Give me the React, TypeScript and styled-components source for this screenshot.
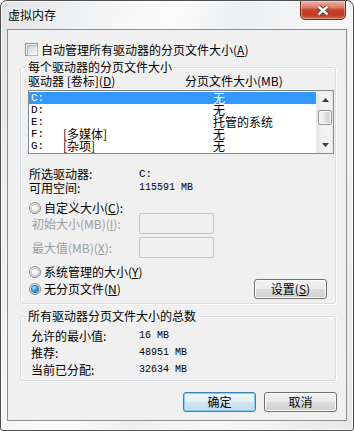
import React from "react";
import styled, { createGlobalStyle } from "styled-components";

const Global = createGlobalStyle`
  html, body { margin: 0; padding: 0; background: #ffffff; }
  body { font-family: "Noto Sans CJK SC", "Noto Sans", sans-serif; font-size: 12px; color: #000; }
  * { box-sizing: border-box; }
`;

const Win = styled.div`
  width: 354px;
  height: 431px;
  border: 1px solid #4e4e4e;
  border-radius: 7px 7px 3px 3px;
  background: linear-gradient(105deg, #e2e5e8 0%, #f3f4f5 22%, #fcfcfc 38%, #eceef0 52%, #f8f8f8 70%, #e6e8ea 100%);
  box-shadow: inset 0 0 0 1px rgba(255, 255, 255, 0.75);
  display: flex;
  flex-direction: column;
  overflow: hidden;
`;

const TitleBar = styled.div`
  height: 28px;
  display: flex;
  justify-content: space-between;
  align-items: flex-start;
  padding: 0 7px;
`;

const Title = styled.div`
  margin-top: 8px;
  font-size: 12px;
  line-height: 12px;
  text-shadow: 0 0 5px #fff, 0 0 3px #fff;
`;

const CloseBtn = styled.div`
  width: 46px;
  height: 20px;
  margin-top: -1px;
  border: 1px solid #6e2a1f;
  border-radius: 0 0 5px 5px;
  background: linear-gradient(#eab0a2 0%, #de7d69 35%, #c8432b 50%, #c23a22 75%, #d8664b 100%);
  box-shadow: inset 0 0 0 1px rgba(255, 255, 255, 0.35);
  display: flex;
  align-items: center;
  justify-content: center;
`;

const Client = styled.div`
  margin: 0 6px;
  height: 392px;
  border: 1px solid #8f8f8f;
  background: #f0f0f0;
  display: flex;
  flex-direction: column;
`;

const CheckRow = styled.div`
  margin: 13px 0 0 17px;
  height: 13px;
  display: flex;
  align-items: center;
  gap: 3px;
  line-height: 13px;
`;

const CheckBox = styled.span`
  width: 13px;
  height: 13px;
  border: 1px solid #8e8f8f;
  background: #f5f5f5;
  padding: 1px;
  display: block;
  &::after {
    content: "";
    display: block;
    width: 9px;
    height: 9px;
    border: 1px solid #b3b6ba;
    background: linear-gradient(135deg, #cdcfd2 0%, #e6e7e8 50%, #f8f8f8 100%);
  }
`;

const Group = styled.fieldset<{ $mt: number; $pl: number }>`
  margin: ${(p) => p.$mt}px 10px 0 12px;
  padding: 0 1px ${(p) => (p.$pl === 7 ? 4 : 5)}px ${(p) => p.$pl}px;
  border: 1px solid #d5dfe5;
  border-radius: 3px;
  box-shadow: inset 1px 1px 0 #ffffff, 1px 1px 0 #ffffff;
  min-width: 0;
`;

const Legend = styled.legend<{ $ml: number }>`
  padding: 0 2px;
  margin-left: ${(p) => p.$ml}px;
  font-size: 12px;
  line-height: 12px;
  height: 12px;
`;

const HeaderRow = styled.div`
  margin-top: 2px;
  height: 12px;
  line-height: 12px;
  display: grid;
  grid-template-columns: 157px 1fr;
`;

const ListBox = styled.div`
  margin-top: 3px;
  height: 64px;
  border: 1px solid #828790;
  background: #ffffff;
  display: flex;
`;

const Rows = styled.div`
  flex: 1;
  padding-top: 1px;
`;

const Row = styled.div<{ $sel?: boolean }>`
  height: 12px;
  line-height: 12px;
  padding-left: 2px;
  display: grid;
  grid-template-columns: 32px 150px 1fr;
  background: ${(p) => (p.$sel ? "#3399ff" : "transparent")};
  color: ${(p) => (p.$sel ? "#ffffff" : "#000000")};
  white-space: nowrap;
`;

const Mono = styled.span<{ $size?: number }>`
  font-family: "Liberation Mono", "DejaVu Sans Mono", monospace;
  font-size: ${(p) => p.$size ?? 10}px;
`;

const ScrollBar = styled.div`
  width: 17px;
  display: flex;
  flex-direction: column;
  background: linear-gradient(90deg, #e4e4e4 0%, #f1f1f1 25%, #f3f3f3 75%, #e9e9e9 100%);
  border-left: 1px solid #ececec;
`;

const ArrowBtn = styled.div`
  height: 17px;
  display: flex;
  align-items: center;
  justify-content: center;
`;

const Track = styled.div`
  flex: 1;
  padding: 2px 1px 0 1px;
`;

const Thumb = styled.div`
  height: 15px;
  border: 1px solid #959595;
  border-radius: 2px;
  background: linear-gradient(90deg, #f4f4f4 0%, #eaeaea 45%, #dcdcdc 55%, #d2d2d2 100%);
  box-shadow: inset 0 0 0 1px #fbfbfb;
`;

const InfoRow = styled.div<{ $mt: number; $col: number; $pl: number }>`
  margin-top: ${(p) => p.$mt}px;
  padding-left: ${(p) => p.$pl}px;
  height: 12px;
  line-height: 12px;
  display: grid;
  grid-template-columns: ${(p) => p.$col}px 1fr;
  align-items: center;
`;

const RadioRow = styled.div<{ $mt: number; $h: number }>`
  margin-top: ${(p) => p.$mt}px;
  height: ${(p) => p.$h}px;
  padding-left: 1px;
  display: flex;
  align-items: center;
  gap: 3px;
  line-height: 12px;
`;

const Radio = styled.span<{ $checked?: boolean }>`
  width: 12px;
  height: 12px;
  border-radius: 50%;
  border: 1px solid #8a8c8e;
  background: radial-gradient(circle at 35% 30%, #ffffff 0%, #e6e6e6 55%, #cfd0d1 100%);
  display: flex;
  align-items: center;
  justify-content: center;
  flex-shrink: 0;
  &::after {
    content: "";
    width: 6px;
    height: 6px;
    border-radius: 50%;
    background: ${(p) =>
      p.$checked
        ? "radial-gradient(circle at 35% 30%, #bdf0ff 0%, #3a9be0 45%, #0d5aa6 100%)"
        : "radial-gradient(circle at 35% 30%, #ffffff 0%, #e9e9e9 100%)"};
    box-shadow: ${(p) => (p.$checked ? "0 0 0 1px #2f6fa8" : "0 0 0 1px #c9cacb")};
  }
`;

const InputRow = styled.div<{ $mt: number }>`
  margin-top: ${(p) => p.$mt}px;
  height: 21px;
  display: grid;
  grid-template-columns: 111px 75px;
  align-items: center;
`;

const DimLabel = styled.span`
  padding-left: 4px;
  color: #9d9d9d;
  line-height: 12px;
  white-space: nowrap;
`;

const TextBox = styled.div`
  height: 21px;
  border: 1px solid #c3c5c7;
  border-radius: 2px;
  background: #f0f0f0;
`;

const BottomRow = styled.div`
  margin-top: 1px;
  height: 20px;
  padding-left: 1px;
  display: flex;
  align-items: center;
  gap: 3px;
  line-height: 12px;
`;

const Button = styled.div<{ $primary?: boolean }>`
  width: 73px;
  height: 20px;
  border-radius: 3px;
  border: 1px solid ${(p) => (p.$primary ? "#3c7fb1" : "#707070")};
  background: ${(p) =>
    p.$primary
      ? "linear-gradient(#f0f7fb 0%, #e4f0f7 50%, #d2e4ef 50%, #c7dcea 100%)"
      : "linear-gradient(#f2f2f2 0%, #ebebeb 50%, #dddddd 50%, #cfcfcf 100%)"};
  box-shadow: ${(p) => (p.$primary ? "inset 0 0 0 1px #7fd0f7" : "inset 0 0 0 1px #fcfcfc")};
  display: flex;
  align-items: center;
  justify-content: center;
  line-height: 12px;
  white-space: nowrap;
`;

const SetButton = styled(Button)`
  margin-left: auto;
  margin-right: 7px;
`;

const ButtonBar = styled.div`
  margin-top: 11px;
  margin-right: 9px;
  display: flex;
  justify-content: flex-end;
  gap: 8px;
`;

const Key = styled.span`
  text-decoration: underline;
  text-underline-offset: 1px;
`;

const Mn = ({ k }: { k: string }) => (
  <span>
    (<Key>{k}</Key>)
  </span>
);

const UpArrow = () => (
  <svg width="7" height="4" viewBox="0 0 7 4">
    <path d="M3.5 0 L7 4 L0 4 Z" fill="#3d3d3d" />
  </svg>
);

const DownArrow = () => (
  <svg width="7" height="4" viewBox="0 0 7 4">
    <path d="M0 0 L7 0 L3.5 4 Z" fill="#3d3d3d" />
  </svg>
);

const CloseGlyph = () => (
  <svg width="14" height="11" viewBox="0 0 14 11">
    <path d="M2.5 1.5 L11.5 9.5 M11.5 1.5 L2.5 9.5" stroke="#4b3430" strokeWidth="4.2" />
    <path d="M2.5 1.5 L11.5 9.5 M11.5 1.5 L2.5 9.5" stroke="#ffffff" strokeWidth="2.4" />
  </svg>
);

const drives = [
  { d: "C:", label: "", size: "无", sel: true },
  { d: "D:", label: "", size: "无" },
  { d: "E:", label: "", size: "托管的系统" },
  { d: "F:", label: "[多媒体]", size: "无" },
  { d: "G:", label: "[杂项]", size: "无" },
];

export default function App() {
  return (
    <>
      <Global />
      <Win>
        <TitleBar>
          <Title>虚拟内存</Title>
          <CloseBtn>
            <CloseGlyph />
          </CloseBtn>
        </TitleBar>
        <Client>
          <CheckRow>
            <CheckBox />
            <span>
              自动管理所有驱动器的分页文件大小<Mn k="A" />
            </span>
          </CheckRow>

          <Group $mt={5} $pl={7}>
            <Legend $ml={-2}>每个驱动器的分页文件大小</Legend>
            <HeaderRow>
              <span>
                驱动器 [卷标]<Mn k="D" />
              </span>
              <span>分页文件大小(MB)</span>
            </HeaderRow>
            <ListBox>
              <Rows>
                {drives.map((r) => (
                  <Row key={r.d} $sel={r.sel}>
                    <Mono $size={11}>{r.d}</Mono>
                    <span>{r.label}</span>
                    <span>{r.size}</span>
                  </Row>
                ))}
              </Rows>
              <ScrollBar>
                <ArrowBtn>
                  <UpArrow />
                </ArrowBtn>
                <Track>
                  <Thumb />
                </Track>
                <ArrowBtn>
                  <DownArrow />
                </ArrowBtn>
              </ScrollBar>
            </ListBox>

            <InfoRow $mt={14} $col={110} $pl={1}>
              <span>所选驱动器:</span>
              <Mono $size={11}>C:</Mono>
            </InfoRow>
            <InfoRow $mt={2} $col={110} $pl={1}>
              <span>可用空间:</span>
              <Mono>115591 MB</Mono>
            </InfoRow>

            <RadioRow $mt={8} $h={11}>
              <Radio />
              <span>
                自定义大小<Mn k="C" />:
              </span>
            </RadioRow>
            <InputRow $mt={0}>
              <DimLabel>
                初始大小(MB)<Mn k="I" />:
              </DimLabel>
              <TextBox />
            </InputRow>
            <InputRow $mt={3}>
              <DimLabel>
                最大值(MB)<Mn k="X" />:
              </DimLabel>
              <TextBox />
            </InputRow>

            <RadioRow $mt={8} $h={12}>
              <Radio />
              <span>
                系统管理的大小<Mn k="Y" />
              </span>
            </RadioRow>
            <BottomRow>
              <Radio $checked />
              <span>
                无分页文件<Mn k="N" />
              </span>
              <SetButton>
                设置<Mn k="S" />
              </SetButton>
            </BottomRow>
          </Group>

          <Group $mt={6} $pl={7}>
            <Legend $ml={-2}>所有驱动器分页文件大小的总数</Legend>
            <InfoRow $mt={8} $col={108} $pl={3}>
              <span>允许的最小值:</span>
              <Mono>16 MB</Mono>
            </InfoRow>
            <InfoRow $mt={5} $col={108} $pl={3}>
              <span>推荐:</span>
              <Mono>48951 MB</Mono>
            </InfoRow>
            <InfoRow $mt={5} $col={108} $pl={3}>
              <span>当前已分配:</span>
              <Mono>32634 MB</Mono>
            </InfoRow>
          </Group>

          <ButtonBar>
            <Button $primary>确定</Button>
            <Button>取消</Button>
          </ButtonBar>
        </Client>
      </Win>
    </>
  );
}
